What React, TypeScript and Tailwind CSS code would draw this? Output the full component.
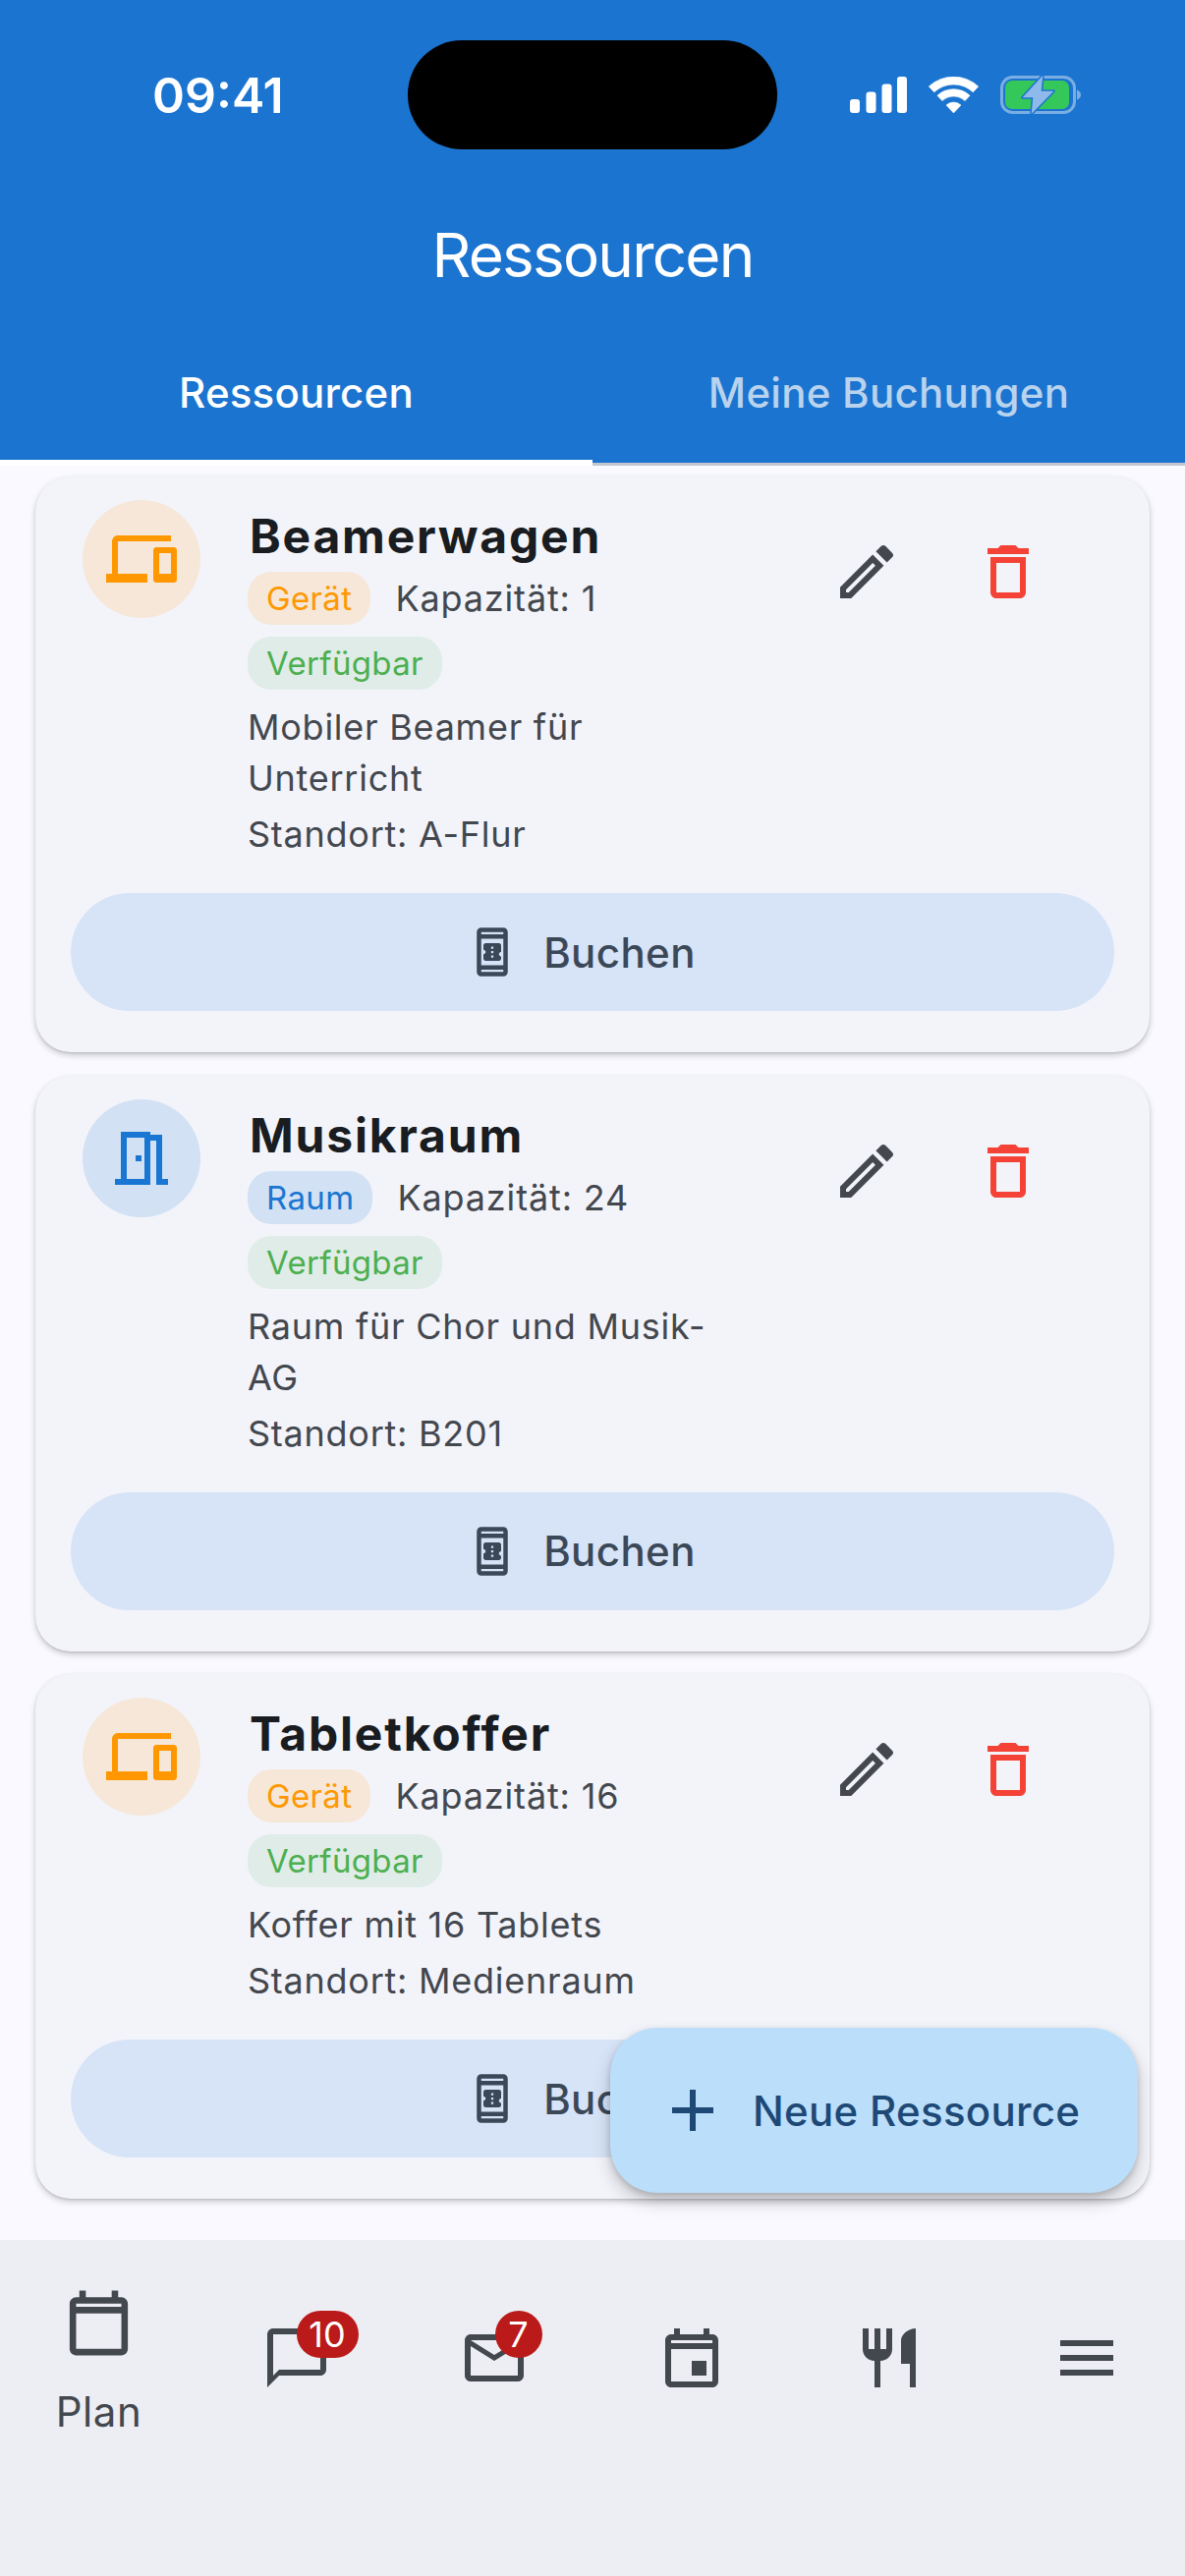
import React from "react";

const P = {
  devices: "M4 6h18V4H4c-1.1 0-2 .9-2 2v11H0v3h14v-3H4V6zm19 2h-6c-.55 0-1 .45-1 1v10c0 .55.45 1 1 1h6c.55 0 1-.45 1-1V9c0-.55-.45-1-1-1zm-1 9h-4v-7h4v7z",
  door: "M19 19V4h-4V3H5v16H3v2h12V6h2v15h4v-2h-2zm-6 0H7V5h6v14zm-3-8h2v2h-2z",
  edit: "M3 17.25V21h3.75L17.81 9.94l-3.75-3.75L3 17.25zM5.92 19H5v-.92l9.06-9.06.92.92L5.92 19zM20.71 5.63l-2.34-2.34c-.2-.2-.45-.29-.71-.29s-.51.1-.7.29l-1.83 1.83 3.75 3.75 1.83-1.83c.39-.39.39-1.02 0-1.41z",
  trash: "M16 9v10H8V9h8m-1.5-6h-5l-1 1H5v2h14V4h-3.5l-1-1zM18 7H6v12c0 1.1.9 2 2 2h8c1.1 0 2-.9 2-2V7z",
  book: "M17 1.01L7 1c-1.1 0-2 .9-2 2v18c0 1.1.9 2 2 2h10c1.1 0 2-.9 2-2V3c0-1.1-.9-1.99-2-1.99zM17 18H7V6h10v12zm0 3H7v-1h10v1zm0-17H7V3h10v1zM16 10V8.99c0-.55-.45-.99-1-.99H9c-.55 0-.99.44-.99.99V11c.55 0 .99.45.99 1s-.44 1-1 1v2.01c0 .55.45.99 1 .99h6c.55 0 1-.44 1-.99V14c-.55 0-1-.45-1-1s.45-1 1-1zm-3.5 4.5h-1v-1h1v1zm0-2h-1v-1h1v1zm0-2h-1v-1h1v1z",
  plus: "M19 13h-6v6h-2v-6H5v-2h6V5h2v6h6v2z",
  cal: "M19 4h-1V2h-2v2H8V2H6v2H5c-1.1 0-2 .9-2 2v14c0 1.1.9 2 2 2h14c1.1 0 2-.9 2-2V6c0-1.1-.9-2-2-2zm0 16H5V9h14v11zM5 7V6h14v1H5z",
  event: "M19 4h-1V2h-2v2H8V2H6v2H5c-1.1 0-2 .9-2 2v14c0 1.1.9 2 2 2h14c1.1 0 2-.9 2-2V6c0-1.1-.9-2-2-2zm0 16H5V9h14v11zM5 7V6h14v1H5zm7 6h5v5h-5z",
  chat: "M20 2H4c-1.1 0-2 .9-2 2v18l4-4h14c1.1 0 2-.9 2-2V4c0-1.1-.9-2-2-2zm0 14H6l-2 2V4h16v12z",
  mail: "M20 4H4c-1.1 0-1.99.9-1.99 2L2 18c0 1.1.9 2 2 2h16c1.1 0 2-.9 2-2V6c0-1.1-.9-2-2-2zm0 14H4V8l8 5 8-5v10zm-8-7L4 6h16l-8 5z",
  food: "M16 6v8h3v8h2V2c-2.76 0-5 2.24-5 4zm-5 3H9V2H7v7H5V2H3v7c0 2.21 1.79 4 4 4v9h2v-9c2.21 0 4-1.79 4-4V2h-2v7z",
  menu: "M3 18h18v-2H3v2zm0-5h18v-2H3v2zm0-7v2h18V6H3z",
};

function Icon({ d, className }: { d: string; className: string }) {
  return (
    <svg viewBox="0 0 24 24" fill="currentColor" fillRule="evenodd" className={className}>
      <path d={d} />
    </svg>
  );
}

function StatusIcons() {
  return (
    <div className="flex items-center ml-[74px]">
      <svg viewBox="0 0 58 37" className="w-[58px] h-[37px]" fill="#fff">
        <rect x="0" y="23" width="10" height="14" rx="3" />
        <rect x="16.5" y="15.5" width="10" height="21.5" rx="3" />
        <rect x="32.5" y="7.5" width="10" height="29.5" rx="3" />
        <rect x="48" y="0" width="10" height="37" rx="3" />
      </svg>
      <svg viewBox="0 0 51 37" className="w-[51px] h-[37px] ml-[22px]" fill="#fff" stroke="#fff" strokeWidth="0.6" strokeLinejoin="round">
        <path d="M.3 10A37 37 0 0 1 50.7 10L45.3 15.8A29 29 0 0 0 5.7 15.8Z" />
        <path d="M8.9 19.2A24.3 24.3 0 0 1 42.1 19.2L37.1 24.6A17 17 0 0 0 13.9 24.6Z" />
        <path d="M18 29A11 11 0 0 1 33 29L25.5 37Z" />
      </svg>
      <svg viewBox="0 0 82 41" className="w-[82px] h-[41px] ml-[22px]">
        <rect x="1.5" y="2.5" width="74" height="36" rx="11" fill="none" stroke="#fff" strokeOpacity="0.42" strokeWidth="3" />
        <rect x="5" y="6" width="65" height="29" rx="7" fill="#34c759" />
        <path d="M78 15.5c2.5.8 4 2.6 4 5s-1.5 4.200-4 5z" fill="#fff" fillOpacity="0.42" />
        <path d="M43.300.7L22.700 23.300H33.300L31.700 40L54.300 16.700H41.700Z" fill="#8fb9eb" stroke="#1b74cf" strokeWidth="3" strokeLinejoin="round" paintOrder="stroke" />
      </svg>
    </div>
  );
}

type Res = {
  name: string;
  kind: "Gerät" | "Raum";
  cap: number;
  desc: string;
  loc: string;
};

const items: Res[] = [
  { name: "Beamerwagen", kind: "Gerät", cap: 1, desc: "Mobiler Beamer für Unterricht", loc: "A-Flur" },
  { name: "Musikraum", kind: "Raum", cap: 24, desc: "Raum für Chor und Musik-AG", loc: "B201" },
  { name: "Tabletkoffer", kind: "Gerät", cap: 16, desc: "Koffer mit 16 Tablets", loc: "Medienraum" },
];

function Card({ r }: { r: Res }) {
  const device = r.kind === "Gerät";
  return (
    <div className="rounded-[36px] bg-[#f3f4fa] px-[36px] pb-[42px] shadow-[0_3px_6px_rgba(0,0,0,0.2),0_1px_2px_rgba(0,0,0,0.12)]">
      <div className="flex items-start">
        <div
          className={
            device
              ? "mt-[24px] ml-[12px] flex h-[120px] w-[120px] shrink-0 items-center justify-center rounded-full bg-[#f6e7d9] text-[#ff9800]"
              : "mt-[24px] ml-[12px] flex h-[120px] w-[120px] shrink-0 items-center justify-center rounded-full bg-[#d2e1f3] text-[#1976d2]"
          }
        >
          <Icon d={device ? P.devices : P.door} className="h-[72px] w-[72px]" />
        </div>
        <div className="ml-[48px] w-[480px] pt-[28px]">
          <div className="ml-[2px] text-[48px] leading-[65px] font-bold tracking-[1.8px] text-[#191c20]">{r.name}</div>
          <div className="mt-[4px] flex items-center">
            <span
              className={
                device
                  ? "rounded-[24px] bg-[#f6e7d9] px-[19px] text-[33px] leading-[54px] tracking-[0.35px] text-[#ff9800]"
                  : "rounded-[24px] bg-[#d2e1f3] px-[19px] text-[33px] leading-[54px] tracking-[0.35px] text-[#1976d2]"
              }
            >
              {r.kind}
            </span>
            <span className="ml-[25px] text-[36px] tracking-[0.85px] text-[#43474e]">Kapazität: {r.cap}</span>
          </div>
          <div className="mt-[12px] flex">
            <span className="rounded-[24px] bg-[#e0ece7] px-[19px] text-[33px] leading-[54px] tracking-[0.35px] text-[#4caf50]">Verfügbar</span>
          </div>
          <div className="mt-[12px] text-[36px] leading-[52px] tracking-[0.75px] text-[#43474e]">{r.desc}</div>
          <div className="mt-[5px] text-[36px] leading-[52px] tracking-[0.75px] text-[#43474e]">Standort: {r.loc}</div>
        </div>
        <div className="ml-auto mr-[72px] mt-[61px] flex gap-[72px]">
          <Icon d={P.edit} className="h-[72px] w-[72px] text-[#44474e]" />
          <Icon d={P.trash} className="h-[72px] w-[72px] text-[#f44336]" />
        </div>
      </div>
      <div className="mt-[34px] flex h-[120px] items-center justify-center rounded-full bg-[#d7e3f7] pr-[24px] text-[#3b4858]">
        <Icon d={P.book} className="h-[54px] w-[54px]" />
        <span className="ml-[25px] text-[42px] font-medium tracking-[0.4px]">Buchen</span>
      </div>
    </div>
  );
}

function NavIcon({ d, badge, wide }: { d: string; badge?: string; wide?: boolean }) {
  return (
    <div className="flex justify-center pt-[84px]">
      <div className="relative h-[72px] w-[72px] text-[#43474e]">
        <Icon d={d} className="h-[72px] w-[72px]" />
        {badge && (
          <span
            className={
              wide
                ? "absolute left-[36px] top-[-12px] flex h-[48px] w-[63px] items-center justify-center rounded-full bg-[#ba1a1a] text-[36px] text-white"
                : "absolute left-[37px] top-[-12px] flex h-[48px] w-[48px] items-center justify-center rounded-full bg-[#ba1a1a] text-[36px] text-white"
            }
          >
            {badge}
          </span>
        )}
      </div>
    </div>
  );
}

export default function App() {
  return (
    <div className="relative flex h-[2622px] w-[1206px] flex-col overflow-hidden bg-[#f9f9ff] font-['Inter',sans-serif]">
      <header className="h-[474px] shrink-0 bg-[#1b74cf] text-white">
        <div className="flex h-[111px] items-center pl-[155px] translate-y-[41px]">
          <span className="w-[260px] text-[50px] leading-none font-semibold">09:41</span>
          <div className="h-[111px] w-[376px] rounded-[55px] bg-black" />
          <StatusIcons />
        </div>
        <div className="mt-[104px] h-[90px] text-center text-[62px] leading-[90px] tracking-[-1.8px]">Ressourcen</div>
        <div className="mt-[25px] flex h-[144px]">
          <div className="flex flex-1 items-center justify-center border-b-[6px] border-white text-[42px] font-medium tracking-[0.2px]">
            Ressourcen
          </div>
          <div className="flex flex-1 items-center justify-center border-b-[3px] border-[#c3c6cf] pb-[3px] text-[42px] font-medium tracking-[0.25px] text-[#b9d3ee]">
            Meine Buchungen
          </div>
        </div>
      </header>
      <main className="flex flex-1 flex-col gap-[23.5px] px-[36px] pt-[11px]">
        {items.map((r) => (
          <Card key={r.name} r={r} />
        ))}
      </main>
      <nav className="grid h-[342px] shrink-0 grid-cols-6 bg-[#edeef3]">
        <div className="flex flex-col items-center pt-[45px]">
          <Icon d={P.cal} className="h-[79px] w-[79px] text-[#43474e]" />
          <span className="mt-[26px] text-[42px] leading-[50px] tracking-[0.5px] text-[#43474e]">Plan</span>
        </div>
        <NavIcon d={P.chat} badge="10" wide />
        <NavIcon d={P.mail} badge="7" />
        <NavIcon d={P.event} />
        <NavIcon d={P.food} />
        <NavIcon d={P.menu} />
      </nav>
      <button className="absolute left-[621px] top-[2064px] flex h-[168px] w-[537px] items-center rounded-[48px] bg-[#bbdefb] pl-[48px] text-[#1e4976] shadow-[0_9px_18px_rgba(0,0,0,0.2),0_3px_6px_rgba(0,0,0,0.15)]">
        <Icon d={P.plus} className="h-[72px] w-[72px]" />
        <span className="ml-[25px] text-[42px] font-medium tracking-[0.3px]">Neue Ressource</span>
      </button>
    </div>
  );
}
